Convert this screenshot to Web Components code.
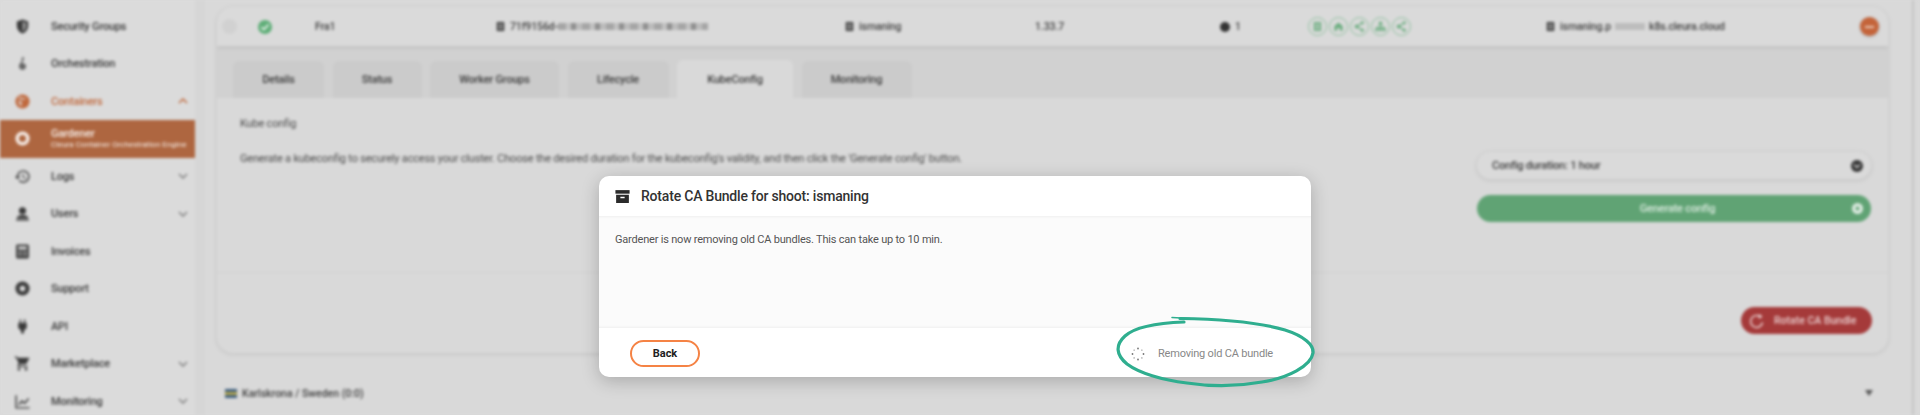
<!DOCTYPE html>
<html>
<head>
<meta charset="utf-8">
<title>Rotate CA Bundle</title>
<style>
    html, body{ margin:0; height:415px; overflow:hidden; background:#d9d9d9; font-family:Roboto, "Liberation Sans", sans-serif; }
</style>
</head>
<body>
<app-stage>
    <side-nav slot="nav">
        <side-item icon="shield">Security Groups</side-item>
        <side-item icon="clef" muted>Orchestration</side-item>
        <side-item icon="cube" open arrow="up">Containers</side-item>
        <side-item icon="ring" active sub="Cleura Container Orchestration Engine">Gardener</side-item>
        <side-item icon="logs" arrow="down">Logs</side-item>
        <side-item icon="user" arrow="down">Users</side-item>
        <side-item icon="calc">Invoices</side-item>
        <side-item icon="support">Support</side-item>
        <side-item icon="plug">API</side-item>
        <side-item icon="cart" arrow="down">Marketplace</side-item>
        <side-item icon="chart" arrow="down">Monitoring</side-item>
    </side-nav>
    <shoot-card slot="main">
        <shoot-row></shoot-row>
        <tab-bar></tab-bar>
        <kube-panel></kube-panel>
        <rotate-foot></rotate-foot>
    </shoot-card>
    <region-row slot="main">Karlskrona / Sweden (0:0)</region-row>
    <rotate-modal slot="over" shoot="ismaning"></rotate-modal>
    <hand-circle slot="over"></hand-circle>
</app-stage>

<script>
// icons for the blurred sidebar and the rows
const ICONS = {
    shield:'<path d="M12 2 4 5v6c0 5 3.4 9.5 8 11 4.6-1.5 8-6 8-11V5z"/><path fill="#dcdcdc" d="M12 5v14c3-1.4 5-4.6 5-8V7z" opacity=".55"/>',
    clef:'<path d="M13 2c-2 2-3 4-2 7-2 2-4 4-4 7 0 3 2 5 5 5 3 0 5-2 5-5s-2-4-4-4l-1-3c2-2 3-4 1-7zm-1 12c-2 0-3 1-3 2.500 0 1.500 1 2.500 3 2.500 2 0 3-1 3-2.500S14 14 12 14z"/>',
    cube:'<circle cx="12" cy="12" r="10"/><path fill="#dcdcdc" d="M12 7 7 5l-1 2 6 3 5-2-1-1zM11 12l-5-2 1 6 4 3z" opacity=".75"/>',
    ring:'<path fill-rule="evenodd" d="M12 2a10 10 0 1 0 0 20 10 10 0 0 0 0-20zm0 5a5 5 0 1 1 0 10 5 5 0 0 1 0-10z"/>',
    logs:'<path d="M13 3a9 9 0 0 0-9 9H1l3.900 3.900L9 12H6a7 7 0 1 1 2.060 4.940l-1.420 1.420A9 9 0 1 0 13 3zm-1 5v5l4.300 2.500.700-1.200-3.500-2.100V8z"/>',
    user:'<circle cx="12" cy="8" r="5"/><path d="M12 14c-4 0-8 1.500-8 4v1h16v-1c0-2.500-4-4-8-4z"/><rect x="3" y="20" width="18" height="2"/>',
    calc:'<path fill-rule="evenodd" d="M5 2h14a2 2 0 0 1 2 2v16a2 2 0 0 1-2 2H5a2 2 0 0 1-2-2V4a2 2 0 0 1 2-2zm1 3v4h12V5zm0 7v2h3v-2zm5 0v2h2v-2zm4 0v2h3v-2zM6 16v2h3v-2zm5 0v2h2v-2zm4 0v2h3v-2z"/>',
    support:'<path fill-rule="evenodd" d="M12 2a10 10 0 1 0 0 20 10 10 0 0 0 0-20zm0 6a4 4 0 1 1 0 8 4 4 0 0 1 0-8z"/>',
    plug:'<path d="M16 7V2h-2v5h-4V2H8v5H6v7l4 4v4h4v-4l4-4V7z"/>',
    cart:'<path d="M7 18a2 2 0 1 0 0 4 2 2 0 0 0 0-4zM1 2v2h2l3.600 7.600-1.300 2.400c-.7 1.400.3 3 1.700 3h12v-2H7.400l1.100-2h7.500c.7 0 1.400-.4 1.700-1L22 4H5.200l-.9-2zm16 16a2 2 0 1 0 0 4 2 2 0 0 0 0-4z"/>',
    chart:'<path d="M2 3h2v17h18v2H2z"/><path d="m6 16 5-6 4 3 5-6 1.500 1.300L15.300 16l-4-3-3.800 4.400z"/>',
    server:'<path fill-rule="evenodd" d="M4 2h16v20H4zm3 4v2h10V6zm0 5v2h10v-2zm0 5v2h10v-2z"/>',
    house:'<path d="M12 3 3 11v10h6v-6h6v6h6V11z"/>',
    share:'<path fill="none" stroke="#69ad7e" stroke-width="2.500" d="M18 4 6 12l12 8"/><circle cx="6" cy="12" r="4.500"/><circle cx="18" cy="4" r="3.500"/><circle cx="18" cy="20" r="3.500"/>',
    tree:'<path fill="none" stroke="#69ad7e" stroke-width="2.500" d="M12 7v6M4 19v-5h16v5"/><circle cx="12" cy="5" r="4"/><circle cx="4" cy="19" r="3.500"/><circle cx="20" cy="19" r="3.500"/><circle cx="12" cy="19" r="3.500"/>',
    archive:'<rect x="2" y="3" width="20" height="5"/><path fill-rule="evenodd" d="M3 9.500h18V21H3zm6 3v2h6v-2z"/>'
};

function svgIcon(name, size, color){
    return `<svg width="${size}" height="${size}" viewBox="0 0 24 24" fill="${color}">${ICONS[name]}</svg>`;
}

class AppStage extends HTMLElement{
    constructor(){
        super();
        this.attachShadow({mode:"open"});
        this.shadowRoot.innerHTML = `
        <style>
            :host{ display:block; position:relative; width:1920px; height:415px; overflow:hidden; }
            .page{ display:flex; height:415px; filter:blur(1.7px); background:#d9d9d9; }
            .nav{ flex:none; width:195px; background:#dbdbdb; border-right:10px solid #d6d6d6; }
            .main{ flex:1; padding:7px 24px 0 12px; border-right:2px solid #c4c4c4; margin-right:6px; min-width:0; }
        </style>
        <div class="page">
            <div class="nav"><slot name="nav"></slot></div>
            <div class="main"><slot name="main"></slot></div>
        </div>
        <slot name="over"></slot>
        `;
    }
}

class SideNav extends HTMLElement{
    constructor(){
        super();
        this.attachShadow({mode:"open"});
        this.shadowRoot.innerHTML = `
        <style>:host{ display:flex; flex-direction:column; padding-top:7.500px; }</style>
        <slot></slot>`;
    }
}

class SideItem extends HTMLElement{
    constructor(){
        super();
        this.attachShadow({mode:"open"});
        const active = this.hasAttribute("active");
        const open = this.hasAttribute("open");
        const color = active ? "#f6eee9" : open ? "#c0683c" : this.hasAttribute("muted") ? "#666" : "#3a3a3a";
        const arrow = this.getAttribute("arrow");
        const sub = this.getAttribute("sub");
        this.shadowRoot.innerHTML = `
        <style>
            :host{ display:flex; align-items:center; height:37.500px; box-sizing:border-box; padding-left:14px; flex:none;
                   background:${active ? "#ae6640" : "none"}; color:${active ? "#f6eee9" : open ? "#c0683c" : "#3a3a3a"}; }
            .ic{ width:17px; height:17px; display:flex; flex:none; }
            .txt{ margin-left:20px; flex:1; font-size:11px; letter-spacing:-.2px; font-weight:500; line-height:13px; }
            small{ display:block; font-size:8px; font-weight:400; line-height:10px; white-space:nowrap; letter-spacing:0; }
            svg.ar{ margin-right:7px; flex:none; }
        </style>
        <span class="ic">${svgIcon(this.getAttribute("icon"), 17, color)}</span>
        <span class="txt"><slot></slot>${sub ? `<small>${sub}</small>` : ""}</span>
        ${arrow ? `<svg class="ar" width="10" height="6" viewBox="0 0 10 6" fill="none" stroke="${open ? "#c0683c" : "#808080"}" stroke-width="1.500"><path d="${arrow == "up" ? "M1 5l4-4 4 4" : "M1 1l4 4 4-4"}"/></svg>` : ""}
        `;
    }
}

class ShootCard extends HTMLElement{
    constructor(){
        super();
        this.attachShadow({mode:"open"});
        this.shadowRoot.innerHTML = `
        <style>
            :host{ display:flex; flex-direction:column; height:346px; border-radius:16px; background:#d9d9d9;
                   box-shadow:0 1px 5px rgba(0,0,0,.11); overflow:hidden; }
        </style>
        <slot></slot>`;
    }
}

class ShootRow extends HTMLElement{
    constructor(){
        super();
        this.attachShadow({mode:"open"});
        const server = svgIcon("server", 11, "#333");
        const chips = ["server","house","share","tree","share"].map(n => `<i class="chip">${svgIcon(n, 11, "#69ad7e")}</i>`).join("");
        this.shadowRoot.innerHTML = `
        <style>
            :host{ display:grid; grid-template-columns:36px 57px 180px 349px 191px 185px 88px 237px 1fr; align-items:center;
                   height:39px; flex:none; padding-left:5px; font-size:10.500px; letter-spacing:-.1px; font-weight:500; color:#404040; white-space:nowrap;
                   box-shadow:0 2px 4px rgba(0,0,0,.08); position:relative; background:#dadada; }
            span{ display:flex; align-items:center; gap:4px; }
            .ghost{ width:15px; height:15px; border-radius:50%; background:#d1d1d1; }
            .ok{ width:14px; height:14px; border-radius:50%; background:#5fae78; display:flex; justify-content:center; }
            .mask{ display:inline-block; height:7px; background:repeating-linear-gradient(90deg,#a5a5a5 0 8px,#c2c2c2 8px 13px,#8e8e8e 13px 18px,#bcbcbc 18px 24px); margin-left:-4px; }
            .chips{ gap:2px; }
            .chip{ width:19px; height:19px; border-radius:50%; border:1.500px solid #8fc09f; box-sizing:border-box; display:flex; align-items:center; justify-content:center; }
            .dot{ width:10px; height:10px; border-radius:50%; background:#333; }
            .end{ display:flex; justify-content:space-between; align-items:center; }
            .min{ width:19px; height:19px; border-radius:50%; background:#c4643a; display:flex; align-items:center; justify-content:center; margin-right:9px; box-shadow:0 1px 3px rgba(0,0,0,.2); }
            .min i{ width:9px; height:2px; background:#e9c8b6; }
        </style>
        <span class="ghost"></span>
        <span class="ok"><svg width="14" height="14" viewBox="0 0 14 14" fill="none" stroke="#e8f2ea" stroke-width="1.700"><path d="M3.500 7.200l2.400 2.400 4.600-5"/></svg></span>
        <span>Fra1</span>
        <span>${server}71f9156d-<i class="mask" style="width:150px"></i></span>
        <span>${server}ismaning</span>
        <span>1.33.7</span>
        <span style="gap:5px"><i class="dot"></i>1</span>
        <span class="chips">${chips}</span>
        <div class="end">
            <span>${server}ismaning.p<i class="mask" style="width:30px;margin:0;background:#bdbdbd"></i> k8s.cleura.cloud</span>
            <span class="min"><i></i></span>
        </div>
        `;
    }
}

class TabBar extends HTMLElement{
    constructor(){
        super();
        this.attachShadow({mode:"open"});
        const tabs = [["Details",91],["Status",89],["Worker Groups",129],["Lifecycle",101],["KubeConfig",116],["Monitoring",110]];
        this.shadowRoot.innerHTML = `
        <style>
            :host{ display:flex; align-items:flex-end; gap:8.500px; height:52px; flex:none; padding-left:16px; box-sizing:border-box;
                   background:#d1d1d1; }
            div{ height:37px; display:flex; align-items:center; justify-content:center; background:#cbcbcb; border-radius:6px 6px 0 0;
                 font-size:11px; letter-spacing:-.2px; font-weight:500; color:#3c3c3c; box-sizing:border-box; }
            .on{ height:38px; background:#d9d9d9; }
        </style>
        ${tabs.map((t, i) => `<div class="${i == 4 ? "on" : ""}" style="width:${t[1]}px">${t[0]}</div>`).join("")}
        `;
    }
}

class KubePanel extends HTMLElement{
    constructor(){
        super();
        this.attachShadow({mode:"open"});
        this.shadowRoot.innerHTML = `
        <style>
            :host{ display:flex; justify-content:space-between; height:175px; flex:none; box-sizing:border-box; padding:19px 17px 0 23px;
                   font-size:11px; letter-spacing:-.2px; color:#4a4a4a; border-bottom:1px solid #d1d1d1; }
            p{ margin:0 0 22px; line-height:13px; }
            .side{ width:394px; padding-top:35px; display:flex; flex-direction:column; gap:16px; }
            .sel, .gen{ height:27px; border-radius:14px; display:flex; align-items:center; padding:0 8px 0 15px; font-weight:500; }
            .sel{ justify-content:space-between; box-shadow:0 1px 5px rgba(0,0,0,.12); background:#dadada; color:#3c3c3c; }
            .sel svg{ flex:none; }
            .gen{ background:#60a374; color:#dcebe0; justify-content:center; position:relative; }
            .gen svg{ position:absolute; right:8px; }
        </style>
        <div>
            <p>Kube config</p>
            <p>Generate a kubeconfig to securely access your cluster. Choose the desired duration for the kubeconfig's validity, and then click the 'Generate config' button.</p>
        </div>
        <div class="side">
            <div class="sel">Config duration: 1 hour
                <svg width="12" height="12" viewBox="0 0 12 12"><circle cx="6" cy="6" r="6" fill="#333"/><path d="M3 4.500l3 3 3-3" fill="none" stroke="#d9d9d9" stroke-width="1.400"/></svg>
            </div>
            <div class="gen">Generate config
                <svg width="11" height="11" viewBox="0 0 11 11"><circle cx="5.500" cy="5.500" r="5.500" fill="#e0ece3"/><circle cx="5.500" cy="5.500" r="2" fill="#60a374"/></svg>
            </div>
        </div>
        `;
    }
}

class RotateFoot extends HTMLElement{
    constructor(){
        super();
        this.attachShadow({mode:"open"});
        this.shadowRoot.innerHTML = `
        <style>
            :host{ display:flex; justify-content:flex-end; padding:34px 16px 0 0; }
            div{ width:131px; height:27px; border-radius:14px; background:#a53a3a; color:#e9cfcf; font-size:10.500px; font-weight:500;
                 display:flex; align-items:center; gap:9px; padding-left:8px; box-sizing:border-box; }
        </style>
        <div>
            <svg width="16" height="16" viewBox="0 0 16 16" fill="none" stroke="#ecd6d6" stroke-width="1.500"><path d="M11 3.500a6 6 0 1 0 2.500 6"/><path d="M10 1l3.500 2.500L10 6" fill="#ecd6d6" stroke="none"/></svg>
            Rotate CA Bundle
        </div>
        `;
    }
}

class RegionRow extends HTMLElement{
    constructor(){
        super();
        this.attachShadow({mode:"open"});
        this.shadowRoot.innerHTML = `
        <style>
            :host{ display:flex; align-items:center; height:30px; margin-top:25px; padding:0 15px 0 8px; font-size:10.500px; font-weight:500; color:#404040; }
            .flag{ width:12px; height:9px; margin-right:5px; background:linear-gradient(#3f5f80 0 3px,#b5a64e 3px 6px,#3f5f80 6px); }
            .txt{ flex:1; }
        </style>
        <i class="flag"></i><span class="txt"><slot></slot></span>
        <svg width="8" height="6" viewBox="0 0 8 6" fill="#555"><path d="M0 0h8L4 6z"/></svg>
        `;
    }
}

class RotateModal extends HTMLElement{
    constructor(){
        super();
        this.attachShadow({mode:"open"});
        const dots = [...Array(8).keys()].map(i => {
            const a = i * Math.PI / 4;
            return `<circle cx="${(7 + 5.500 * Math.cos(a)).toFixed(1)}" cy="${(7 + 5.500 * Math.sin(a)).toFixed(1)}" r="${i % 2 ? .6 : .9}"/>`;
        }).join("");
        this.shadowRoot.innerHTML = `
        <style>
            :host{ position:absolute; left:599px; top:176px; width:712px; height:201px; display:flex; flex-direction:column;
                   background:#fff; border-radius:10px; overflow:hidden; box-shadow:0 4px 18px rgba(0,0,0,.22); color:#333; }
            header{ height:40px; flex:none; display:flex; align-items:center; padding-left:15px; gap:10px; font-size:14px; letter-spacing:-.2px; font-weight:500; color:#333; }
            .body{ flex:1; background:#fbfbfb; padding:17px 16px; font-size:11px; letter-spacing:-.2px; line-height:14px; color:#555;
                   box-shadow:inset 0 3px 3px -2px rgba(0,0,0,.05), inset 0 -3px 3px -2px rgba(0,0,0,.05); }
            footer{ height:49px; flex:none; display:flex; align-items:center; justify-content:space-between; padding:2px 38px 0 31px; box-sizing:border-box; }
            button{ width:70px; height:27px; border:2px solid #f58345; border-radius:14px; background:#fff; font:700 11px Roboto, sans-serif; color:#222; padding:0; }
            .busy{ display:flex; align-items:center; gap:13px; font-size:11px; letter-spacing:-.2px; color:#888; }
        </style>
        <header>${svgIcon("archive", 17, "#2b2b2b")}<span>Rotate CA Bundle for shoot: ${this.getAttribute("shoot")}</span></header>
        <div class="body">Gardener is now removing old CA bundles. This can take up to 10 min.</div>
        <footer>
            <button>Back</button>
            <div class="busy"><svg width="14" height="14" viewBox="0 0 14 14" fill="#777">${dots}</svg>Removing old CA bundle</div>
        </footer>
        `;
    }
}

class HandCircle extends HTMLElement{
    constructor(){
        super();
        this.attachShadow({mode:"open"});
        this.shadowRoot.innerHTML = `
        <style>
            :host{ position:absolute; left:1110px; top:310px; width:210px; height:82px; }
            svg{ display:block; }
        </style>
        <svg width="210" height="82" viewBox="1110 310 210 82" fill="none" stroke="#2fae8f" stroke-linecap="round">
            <path stroke-width="3.200" d="M1180 318.500C1218 319 1258 322 1285 330C1304 336 1314 345 1313 353C1311 366 1288 378 1262 382C1240 386 1213 387 1187 383C1162 380 1139 373 1127 364C1116 355 1115 345 1125 336C1135 327 1155 323 1184 322"/>
            <path stroke-width="1.500" d="M1172 317.500L1190 318.500"/>
        </svg>
        `;
    }
}

customElements.define("app-stage", AppStage);
customElements.define("side-nav", SideNav);
customElements.define("side-item", SideItem);
customElements.define("shoot-card", ShootCard);
customElements.define("shoot-row", ShootRow);
customElements.define("tab-bar", TabBar);
customElements.define("kube-panel", KubePanel);
customElements.define("rotate-foot", RotateFoot);
customElements.define("region-row", RegionRow);
customElements.define("rotate-modal", RotateModal);
customElements.define("hand-circle", HandCircle);
</script>
</body>
</html>
